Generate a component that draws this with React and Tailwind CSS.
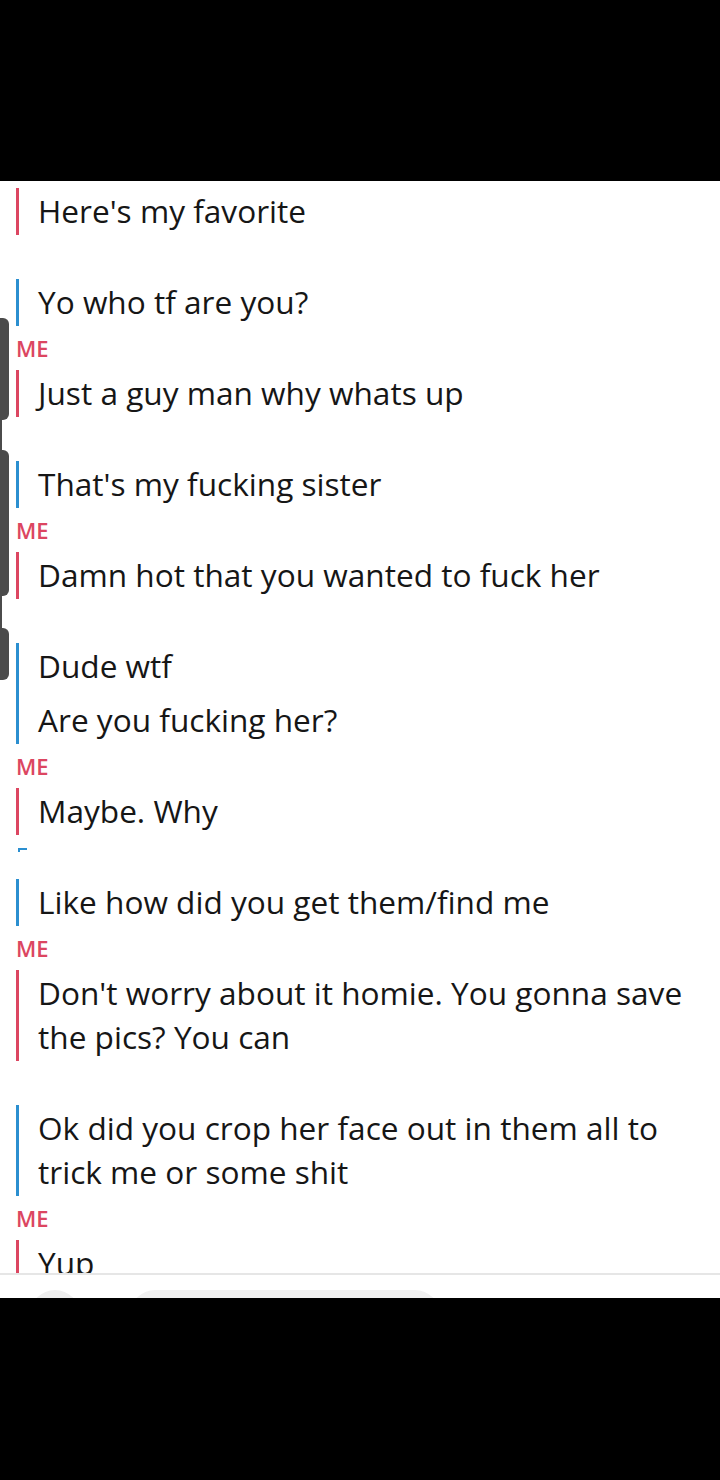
import React from 'react';

const thread = [
  { me: true, first: true, msgs: ["Here's my favorite"] },
  { me: false, msgs: ['Yo who tf are you?'] },
  { me: true, msgs: ['Just a guy man why whats up'] },
  { me: false, msgs: ["That's my fucking sister"] },
  { me: true, msgs: ['Damn hot that you wanted to fuck her'] },
  { me: false, msgs: ['Dude wtf', 'Are you fucking her?'] },
  { me: true, msgs: ['Maybe. Why'] },
  { me: false, mark: true, msgs: ['Like how did you get them/find me'] },
  { me: true, msgs: ["Don't worry about it homie. You gonna save the pics? You can"] },
  { me: false, msgs: ['Ok did you crop her face out in them all to trick me or some shit'] },
  { me: true, msgs: ['Yup'] },
];

const Label = ({ me, mark }) => (
  <div className="h-[44px] pt-[10px] pl-[16px]">
    {me && (
      <span className="block text-[22px] leading-[24px] font-semibold text-[#dc4661]">ME</span>
    )}
    {mark && (
      <div className="flex mt-[3px] ml-[2px]">
        <div className="w-[2px] h-[4px] bg-[#2b8fd0]" />
        <div className="w-[7px] h-[2px] bg-[#2b8fd0]" />
      </div>
    )}
  </div>
);

const Group = ({ group }) => (
  <div className="flex flex-col">
    {!group.first && <Label me={group.me} mark={group.mark} />}
    <div className={`flex ${group.first ? 'pt-[7px]' : ''}`}>
      <div className={`ml-[16px] w-[3px] shrink-0 ${group.me ? 'bg-[#dc4661]' : 'bg-[#2b8fd0]'}`} />
      <div className="flex flex-col gap-[7px] ml-[19px] pr-[10px]">
        {group.msgs.map((m, i) => (
          <p key={i} className="pt-[1px] pb-[2px] text-[31.6px] leading-[44px] text-[#161616]">
            {m}
          </p>
        ))}
      </div>
    </div>
  </div>
);

export default function App() {
  return (
    <div
      className="relative w-[720px] h-[1480px] bg-black flex flex-col"
      style={{ fontFamily: '"Open Sans", "Noto Sans", sans-serif' }}
    >
      <div className="h-[181px] shrink-0" />

      <div className="h-[1092px] shrink-0 bg-white overflow-hidden">
        {thread.map((g, i) => (
          <Group key={i} group={g} />
        ))}
      </div>

      {/* input bar, mostly cut off */}
      <div className="h-[25px] shrink-0 bg-white border-t-2 border-[#e6e6e6] overflow-hidden">
        <div className="flex items-start gap-[50px] pt-[15px] pl-[30px]">
          <div className="w-[50px] h-[50px] rounded-full bg-[#efefef]" />
          <div className="w-[310px] h-[50px] rounded-full bg-[#f1f1f1]" />
        </div>
      </div>

      <div className="flex-1" />

      {/* screen edge tabs */}
      <div className="absolute left-0 top-[318px] w-[9px] h-[102px] rounded-r-[6px] bg-[#4b4b4b]" />
      <div className="absolute left-0 top-[420px] w-[2px] h-[30px] bg-[#4b4b4b]" />
      <div className="absolute left-0 top-[450px] w-[9px] h-[146px] rounded-r-[6px] bg-[#4b4b4b]" />
      <div className="absolute left-0 top-[596px] w-[2px] h-[32px] bg-[#4b4b4b]" />
      <div className="absolute left-0 top-[628px] w-[9px] h-[52px] rounded-r-[6px] bg-[#4b4b4b]" />
    </div>
  );
}
